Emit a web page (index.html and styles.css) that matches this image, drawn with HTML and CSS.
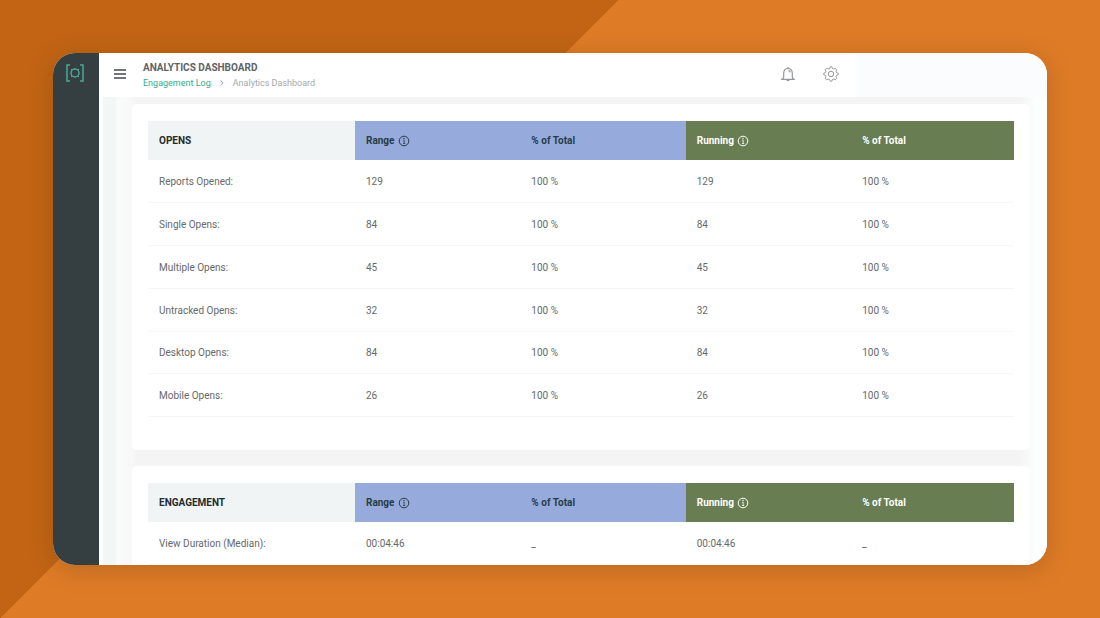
FILE: index.html
```html
<!DOCTYPE html>
<html lang="en">
<head>
  <meta charset="UTF-8">
  <meta name="viewport" content="width=device-width, initial-scale=1.0">
  <title>Analytics Dashboard</title>
  <link rel="stylesheet" href="styles.css">
</head>
<body>
  <svg class="sprite" aria-hidden="true">
    <symbol id="icon-info" viewBox="0 0 12 12">
      <circle cx="6" cy="6" r="4.8" fill="none" stroke="currentColor"/>
      <path d="M5 5.2h1.2v3.2M5 8.5h2.2" fill="none" stroke="currentColor" stroke-width=".8"/>
      <circle cx="6" cy="3.5" r=".7" fill="currentColor"/>
    </symbol>
  </svg>

  <div class="window">
    <aside class="sidebar">
      <a href="#" class="logo" aria-label="Home">
        <svg width="20" height="20" viewBox="0 0 20 20" fill="none" stroke="currentColor" stroke-width="1.5">
          <path d="M5 2H2v16h3M15 2h3v16h-3"/>
          <circle cx="10" cy="10" r="4"/>
          <path d="M6 6l1 1M14 6l-1 1M6 14l1-1M14 14l-1-1" stroke-width="1"/>
        </svg>
      </a>
    </aside>

    <div class="page">
      <header class="topbar">
        <button class="icon-button menu-button" aria-label="Toggle menu">
          <svg width="14" height="12" viewBox="0 0 14 12" fill="none" stroke="currentColor" stroke-width="1.6">
            <path d="M1 2h12M1 6h12M1 10h12"/>
          </svg>
        </button>
        <div class="heading">
          <h1>ANALYTICS DASHBOARD</h1>
          <nav class="breadcrumb" aria-label="Breadcrumb">
            <a href="#">Engagement Log</a>
            <svg width="4" height="6" viewBox="0 0 4 6" fill="none" stroke="currentColor"><path d="M.5.5L3 3 .5 5.5"/></svg>
            <span>Analytics Dashboard</span>
          </nav>
        </div>
        <div class="actions">
          <button class="icon-button" aria-label="Notifications">
            <svg width="16" height="16" viewBox="0 0 16 16" fill="none" stroke="currentColor" stroke-width="1.2">
              <path d="M8 1v1.300M3.700 11.500V7.200C3.700 4.200 5.400 2.300 8 2.300s4.300 1.900 4.300 4.900v4.300M3.700 11.500L2 13.300h12l-1.700-1.800M6.700 13.500c.2 1.600 2.400 1.600 2.600 0M8.500 4.300c1.100.2 1.700 1 1.800 2.100"/>
            </svg>
          </button>
          <button class="icon-button" aria-label="Settings">
            <svg width="16" height="16" viewBox="0 0 16 16" fill="none" stroke="currentColor" stroke-linejoin="round">
              <path d="M6.700 2.400L7.200.8h1.600l.5 1.600 1.500.6 1.500-.8 1.500 1.500-.8 1.500.6 1.500 1.600.5v1.600l-1.600.5-.6 1.500.8 1.500-1.500 1.500-1.500-.8-1.500.6-.5 1.600H7.200l-.5-1.600-1.500-.6-1.500.8-1.500-1.500.8-1.500-.6-1.500-1.600-.5V7.200l1.600-.5.6-1.500-.8-1.500 1.500-1.500 1.500.8z"/>
              <circle cx="8" cy="8" r="2.700"/>
            </svg>
          </button>
        </div>
      </header>

      <main class="content">
        <section class="card">
          <table class="report opens">
            <thead>
              <tr>
                <th scope="col" class="title">OPENS</th>
                <th scope="col" class="range">Range <button class="info" aria-label="About range"><svg><use href="#icon-info"/></svg></button></th>
                <th scope="col" class="range">% of Total</th>
                <th scope="col" class="running">Running <button class="info" aria-label="About running"><svg><use href="#icon-info"/></svg></button></th>
                <th scope="col" class="running">% of Total</th>
              </tr>
            </thead>
            <tbody>
              <tr><td>Reports Opened:</td><td>129</td><td>100 %</td><td>129</td><td>100 %</td></tr>
              <tr><td>Single Opens:</td><td>84</td><td>100 %</td><td>84</td><td>100 %</td></tr>
              <tr><td>Multiple Opens:</td><td>45</td><td>100 %</td><td>45</td><td>100 %</td></tr>
              <tr><td>Untracked Opens:</td><td>32</td><td>100 %</td><td>32</td><td>100 %</td></tr>
              <tr><td>Desktop Opens:</td><td>84</td><td>100 %</td><td>84</td><td>100 %</td></tr>
              <tr><td>Mobile Opens:</td><td>26</td><td>100 %</td><td>26</td><td>100 %</td></tr>
            </tbody>
          </table>
        </section>

        <section class="card">
          <table class="report">
            <thead>
              <tr>
                <th scope="col" class="title">ENGAGEMENT</th>
                <th scope="col" class="range">Range <button class="info" aria-label="About range"><svg><use href="#icon-info"/></svg></button></th>
                <th scope="col" class="range">% of Total</th>
                <th scope="col" class="running">Running <button class="info" aria-label="About running"><svg><use href="#icon-info"/></svg></button></th>
                <th scope="col" class="running">% of Total</th>
              </tr>
            </thead>
            <tbody>
              <tr><td>View Duration (Median):</td><td>00:04:46</td><td>_</td><td>00:04:46</td><td>_</td></tr>
            </tbody>
          </table>
        </section>
      </main>
    </div>
  </div>
</body>
</html>
```

FILE: styles.css
```css
* {
  margin: 0;
  padding: 0;
  box-sizing: border-box;
}

body {
  font-family: Roboto, "Liberation Sans", sans-serif;
  font-size: 10px;
  line-height: 14px;
  color: #66696b;
  height: 100vh;
  padding: 53px;
  background: linear-gradient(135deg, #c26414 437px, #de7b27 437px);
}

button {
  border: none;
  background: none;
  color: inherit;
  cursor: pointer;
}

svg {
  display: block;
}

.sprite {
  position: absolute;
  width: 0;
  height: 0;
}

.window {
  display: flex;
  height: 100%;
  border-radius: 22px;
  overflow: hidden;
  background: #fff;
  box-shadow: 0 4px 24px rgba(80, 50, 10, 0.25);
}

.sidebar {
  flex: 0 0 46px;
  background: #353f41;
}

.logo {
  display: flex;
  justify-content: center;
  padding: 10px 3px 0 0;
  color: #4aa897;
}

.page {
  flex: 1;
  display: flex;
  flex-direction: column;
  min-width: 0;
}

/* top bar */
.topbar {
  flex: 0 0 44px;
  display: flex;
  align-items: center;
  padding: 0 200px 3px 4px;
  background: linear-gradient(to left, #fafcfd 188px, #fff 194px);
}

.icon-button {
  display: flex;
  align-items: center;
  justify-content: center;
  width: 33px;
  height: 33px;
  color: #96999b;
}

.menu-button {
  color: #45494b;
}

.heading {
  padding: 2px 7px 0;
}

.heading h1 {
  font-size: 10px;
  font-weight: 700;
  line-height: 16px;
  color: #606365;
}

.breadcrumb {
  display: flex;
  align-items: center;
  gap: 9px;
  font-size: 9px;
  color: #a5a8aa;
}

.breadcrumb a {
  color: #35ab90;
  text-decoration: none;
}

.actions {
  display: flex;
  gap: 10px;
  margin-left: auto;
}

/* cards */
.content {
  flex: 1;
  display: flex;
  flex-direction: column;
  gap: 16px;
  min-height: 0;
  overflow: hidden;
  padding: 7px 17px 0 33px;
  background:
    linear-gradient(to right, #fff 4px, #f2f6f6 4px, #f2f6f6 16px, #fbfbfb 18px, #f8f8f8 32px, transparent 38px),
    linear-gradient(to left, #fdfefe 12px, #fafafa 17px, #f4f4f4 28px);
}

.card {
  flex: none;
  padding: 17px 16px 33px;
  border-radius: 5px;
  background: #fff;
}

.report {
  width: 100%;
  table-layout: fixed;
  border-collapse: collapse;
}

.opens {
  height: 296px;
}

.report th,
.report td {
  padding: 0 11px;
  text-align: left;
  white-space: nowrap;
}

.report th {
  height: 39px;
  width: 19.1%;
  padding-top: 1px;
  font-weight: 700;
}

.report th:last-child {
  width: auto;
}

.report .title {
  width: 23.9%;
  color: #252a2d;
  background: #f0f4f5;
}

.range {
  color: #263c49;
  background: #96abdc;
}

.running {
  color: #fff;
  background: #687d52;
}

.report td {
  height: 42px;
  padding-top: 2px;
  border-bottom: 1px solid #f6f6f6;
}

.info {
  display: inline-block;
  vertical-align: middle;
  margin-left: 1px;
}

.info svg {
  width: 12px;
  height: 12px;
}
```
